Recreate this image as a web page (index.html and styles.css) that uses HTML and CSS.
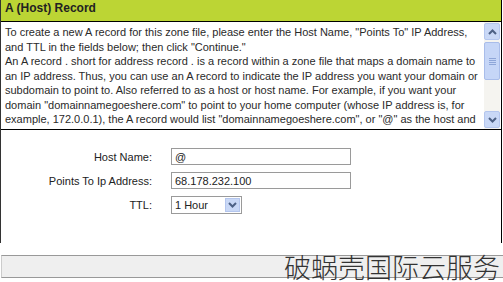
FILE: index.html
```html
<!DOCTYPE html>
<html lang="en">
<head>
  <meta charset="UTF-8">
  <title>A (Host) Record</title>
  <link rel="stylesheet" href="styles.css">
</head>
<body>
  <div class="panel">
    <div class="panel-head">A (Host) Record</div>
    <div class="desc">
      <div class="desc-text">
        To create a new A record for this zone file, please enter the Host Name, "Points To" IP Address,
        and TTL in the fields below; then click "Continue."<br>
        An A record . short for address record . is a record within a zone file that maps a domain name to
        an IP address. Thus, you can use an A record to indicate the IP address you want your domain or
        subdomain to point to. Also referred to as a host or host name. For example, if you want your
        domain "domainnamegoeshere.com" to point to your home computer (whose IP address is, for
        example, 172.0.0.1), the A record would list "domainnamegoeshere.com", or "@" as the host and
        172.0.0.1 as the IP address.
      </div>
      <div class="scrollbar">
        <div class="sb-btn">
          <svg width="9" height="6" viewBox="0 0 9 6"><path d="M1 5 L4.5 1.5 L8 5" fill="none" stroke="#4d6185" stroke-width="2"/></svg>
        </div>
        <div class="sb-track">
          <div class="sb-thumb">
            <span></span><span></span><span></span><span></span>
          </div>
        </div>
        <div class="sb-btn">
          <svg width="9" height="6" viewBox="0 0 9 6"><path d="M1 1 L4.5 4.5 L8 1" fill="none" stroke="#4d6185" stroke-width="2"/></svg>
        </div>
      </div>
    </div>
    <div class="form">
      <label class="form-label">Host Name:</label>
      <input class="form-input" type="text" value="@">
      <label class="form-label">Points To Ip Address:</label>
      <input class="form-input" type="text" value="68.178.232.100">
      <label class="form-label">TTL:</label>
      <div class="select">
        <span>1 Hour</span>
        <div class="select-btn">
          <svg width="9" height="6" viewBox="0 0 9 6"><path d="M1 1 L4.5 4.5 L8 1" fill="none" stroke="#4d6185" stroke-width="2"/></svg>
        </div>
      </div>
    </div>
  </div>
  <div class="footer-bar"></div>
  <div class="watermark">破蜗壳国际云服务</div>
</body>
</html>
```

FILE: styles.css
```css
body {
  margin: 0;
  background: #fff;
  font-family: "Liberation Sans", Arial, sans-serif;
  color: #111;
  width: 503px;
  height: 282px;
  overflow: hidden;
  position: relative;
}

.panel {
  width: 500px;
  border-left: 1px solid #333;
  border-right: 1px solid #000;
}

.panel-head {
  height: 21px;
  line-height: 16px;
  padding-left: 4px;
  background: #bcd534;
  border-bottom: 1px solid #000;
  font-size: 12px;
  font-weight: bold;
  color: #222;
}

.desc {
  display: flex;
  height: 107px;
  border-bottom: 1px solid #000;
}

.desc-text {
  flex: 1;
  overflow: hidden;
  padding: 3px 4px 0 4px;
  font-size: 11px;
  line-height: 14.5px;
  color: #2a2a2a;
}

.scrollbar {
  width: 16px;
  margin-right: 1px;
  display: flex;
  flex-direction: column;
  background: #f5f4f0;
}

.sb-btn {
  height: 15px;
  margin: 1px 0;
  display: flex;
  align-items: center;
  justify-content: center;
  background: #c9d8f6;
  border: 1px solid #b4c6ee;
  border-radius: 2px;
}

.sb-track {
  flex: 1;
}

.sb-thumb {
  height: 36px;
  margin-top: 1px;
  background: #c6d6f7;
  border: 1px solid #a9bdea;
  border-radius: 2px;
  display: flex;
  flex-direction: column;
  align-items: center;
  justify-content: center;
  gap: 1px;
}

.sb-thumb span {
  width: 7px;
  height: 1px;
  background: #8ea6d8;
}

.form {
  display: grid;
  grid-template-columns: 151px 180px;
  column-gap: 19px;
  row-gap: 7px;
  align-items: center;
  align-content: start;
  padding-top: 18px;
  height: 113px;
  font-size: 11px;
  box-sizing: border-box;
}

.form-label {
  text-align: right;
  color: #222;
}

.form-input {
  height: 17px;
  box-sizing: border-box;
  border: 1px solid #9a9a9a;
  padding: 0 3px;
  font-family: inherit;
  font-size: 11px;
  color: #222;
}

.select {
  width: 71px;
  height: 18px;
  box-sizing: border-box;
  border: 1px solid #9a9a9a;
  display: flex;
  align-items: center;
  justify-content: space-between;
  padding-left: 3px;
  color: #222;
}

.select-btn {
  width: 15px;
  height: 14px;
  margin-right: 1px;
  display: flex;
  align-items: center;
  justify-content: center;
  background: #c9d8f6;
  border: 1px solid #b4c6ee;
  box-sizing: border-box;
}

.footer-bar {
  margin-top: 12px;
  height: 21px;
  margin-left: 1px;
  border-top: 1px solid #999;
  border-bottom: 1px solid #999;
  border-left: 1px solid #ccc;
  background: #efefef;
}

.watermark {
  position: absolute;
  right: 3px;
  bottom: -4px;
  font-family: "Noto Sans CJK SC", sans-serif;
  font-weight: 300;
  font-size: 27px;
  color: #333;
}
```
